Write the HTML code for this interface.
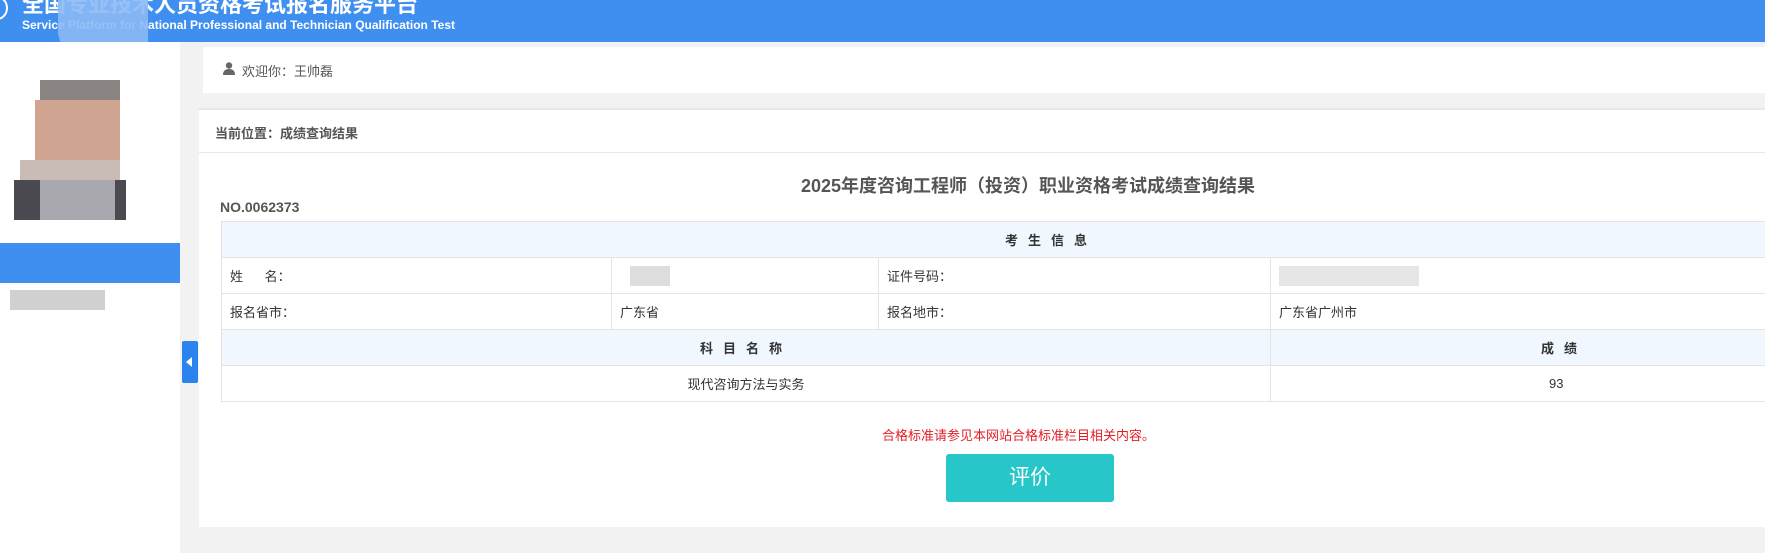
<!DOCTYPE html>
<html><head><meta charset="utf-8"><style>
*{margin:0;padding:0;box-sizing:border-box}
body{width:1765px;height:553px;overflow:hidden;background:#f2f2f2;font-family:"Liberation Sans","Noto Sans CJK SC",sans-serif;position:relative;color:#333}
.abs{position:absolute}
#hdr{left:0;top:0;width:1765px;height:42px;background:#3f8ff0}
#side{left:0;top:42px;width:180px;height:511px;background:#fff}
table{border-collapse:collapse;position:absolute;left:221px;top:221px;width:1600px;font-size:13px;color:#333}
td{border:1px solid #e4e4e4;height:36px;padding-left:8px}
tr.h td{background:#f0f7fe;font-weight:bold;letter-spacing:10px;padding-left:0}
</style></head><body>
<div id="hdr" class="abs">
  <div class="abs" style="left:-14px;top:-4px;width:22px;height:24px;border:2px solid #fff;border-radius:50%"></div>
  <div class="abs" style="left:22px;top:-8px;color:#fff;font-size:22px;font-weight:bold;white-space:nowrap;line-height:26px">全国专业技术人员资格考试报名服务平台</div>
  <div class="abs" style="left:22px;top:18px;color:#fff;font-size:12px;font-weight:bold;white-space:nowrap">Service Platform for National Professional and Technician Qualification Test</div>
  <div class="abs" style="left:58px;top:0;width:90px;height:60px;background:#8bb9f5;border-radius:0 0 10px 30px;opacity:.9"></div>
</div>
<div id="side" class="abs">
  <div class="abs" style="left:40px;top:38px;width:80px;height:20px;background:#8a8482"></div>
  <div class="abs" style="left:35px;top:58px;width:85px;height:60px;background:#cfa592"></div>
  <div class="abs" style="left:20px;top:118px;width:100px;height:20px;background:#c8bcb4"></div>
  <div class="abs" style="left:14px;top:138px;width:112px;height:40px;background:#4a4a50"></div>
  <div class="abs" style="left:40px;top:138px;width:75px;height:40px;background:#a8a8ae"></div>
  <div class="abs" style="left:0;top:201px;width:180px;height:40px;background:#3f8ff0"></div>
  <div class="abs" style="left:10px;top:248px;width:95px;height:20px;background:#d0d0d0"></div>
</div>
<div class="abs" style="left:182px;top:341px;width:16px;height:42px;background:#2b84ee;border-radius:2px"></div>
<div class="abs" style="left:186px;top:357px;width:0;height:0;border-top:5px solid transparent;border-bottom:5px solid transparent;border-right:6px solid #fff"></div>
<div class="abs" style="left:203px;top:47px;width:1562px;height:46px;background:#fff"></div>
<svg class="abs" style="left:223px;top:62px" width="12" height="13" viewBox="0 0 12 13"><circle cx="6" cy="3.5" r="3.2" fill="#666"/><path d="M0 13 Q0 7 6 7 Q12 7 12 13Z" fill="#666"/></svg>
<div class="abs" style="left:242px;top:61px;font-size:13px;color:#555">欢迎你：王帅磊</div>
<div class="abs" style="left:199px;top:108px;width:1566px;height:419px;background:#fff;border-top:2px solid #e6e8e8"></div>
<div class="abs" style="left:215px;top:123px;font-size:13px;font-weight:bold;color:#555">当前位置：成绩查询结果</div>
<div class="abs" style="left:199px;top:152px;width:1566px;height:1px;background:#e8e8e8"></div>
<div class="abs" style="left:801px;top:172px;font-size:18px;font-weight:bold;color:#555;white-space:nowrap">2025年度咨询工程师（投资）职业资格考试成绩查询结果</div>
<div class="abs" style="left:220px;top:199px;font-size:14px;font-weight:bold;color:#555">NO.0062373</div>
<table>
<colgroup><col style="width:390px"><col style="width:267px"><col style="width:392px"><col></colgroup>
<tr class="h"><td colspan="4" style="padding-left:783px">考生信息</td></tr>
<tr><td>姓&nbsp;&nbsp;&nbsp;&nbsp;&nbsp;&nbsp;名：</td><td><span style="display:inline-block;width:40px;height:20px;background:#ddd;vertical-align:middle;margin-left:10px"></span></td><td>证件号码：</td><td><span style="display:inline-block;width:140px;height:20px;background:#e6e6e6;vertical-align:middle"></span></td></tr>
<tr><td>报名省市：</td><td>广东省</td><td>报名地市：</td><td>广东省广州市</td></tr>
<tr class="h"><td colspan="3" style="text-align:center">科目名称</td><td style="padding-left:270px">成绩</td></tr>
<tr><td colspan="3" style="text-align:center;padding:0">现代咨询方法与实务</td><td style="text-align:left;padding-left:278px">93</td></tr>
</table>
<div class="abs" style="left:882px;top:425px;font-size:13px;color:#e31e24;white-space:nowrap">合格标准请参见本网站合格标准栏目相关内容。</div>
<div class="abs" style="left:946px;top:454px;width:168px;height:48px;background:#26c6c9;border-radius:3px;color:#fff;font-size:21px;text-align:center;line-height:48px">评价</div>
</body></html>
